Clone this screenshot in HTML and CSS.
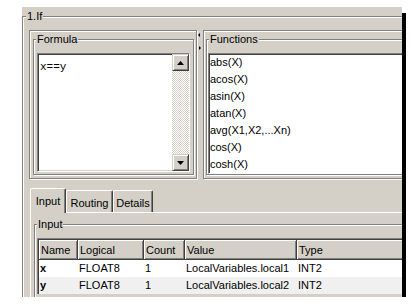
FILE: index.html
```html
<!DOCTYPE html>
<html lang="en">
<head>
    <meta charset="UTF-8">
    <title>1.If</title>
    <link rel="stylesheet" href="styles.css">
</head>
<body>

    <div class="window">
        <div class="group outer">
            <div class="legend">1.If</div>

            <div class="split">
                <div class="pane left">
                    <div class="group formula">
                        <div class="legend">Formula</div>
                        <div class="editor">
                            <div class="code">x==y</div>
                            <div class="vscroll">
                                <div class="sbtn">
                                    <svg width="7" height="4" viewBox="0 0 7 4"><path d="M3.5 0 L7 4 L0 4 Z" fill="#000"/></svg>
                                </div>
                                <div class="track"></div>
                                <div class="sbtn">
                                    <svg width="7" height="4" viewBox="0 0 7 4"><path d="M0 0 L7 0 L3.5 4 Z" fill="#000"/></svg>
                                </div>
                            </div>
                        </div>
                    </div>
                </div>

                <div class="splitter">
                    <svg width="6" height="22" viewBox="0 0 6 22">
                        <path d="M1 4 L3 2 L3 6 Z" fill="#000"/>
                        <path d="M2 15 L4 17 L2 19 Z" fill="#000"/>
                    </svg>
                </div>

                <div class="pane right">
                    <div class="group functions">
                        <div class="legend">Functions</div>
                        <ul class="list">
                            <li>abs(X)</li>
                            <li>acos(X)</li>
                            <li>asin(X)</li>
                            <li>atan(X)</li>
                            <li>avg(X1,X2,...Xn)</li>
                            <li>cos(X)</li>
                            <li>cosh(X)</li>
                        </ul>
                    </div>
                </div>
            </div>

            <div class="tabs">
                <div class="tab active tab-input">Input</div>
                <div class="tab tab-routing">Routing</div>
                <div class="tab tab-details">Details</div>
            </div>

            <div class="tabpage">
                <div class="group input">
                    <div class="legend">Input</div>
                    <div class="gridbox">
                        <table class="grid">
                            <colgroup>
                                <col class="c-name">
                                <col class="c-logical">
                                <col class="c-count">
                                <col class="c-value">
                                <col class="c-type">
                            </colgroup>
                            <tr>
                                <th>Name</th>
                                <th>Logical</th>
                                <th>Count</th>
                                <th>Value</th>
                                <th>Type</th>
                            </tr>
                            <tr>
                                <td class="name">x</td>
                                <td>FLOAT8</td>
                                <td>1</td>
                                <td>LocalVariables.local1</td>
                                <td>INT2</td>
                            </tr>
                            <tr class="alt">
                                <td class="name">y</td>
                                <td>FLOAT8</td>
                                <td>1</td>
                                <td>LocalVariables.local2</td>
                                <td>INT2</td>
                            </tr>
                        </table>
                    </div>
                </div>
            </div>
        </div>
    </div>

</body>
</html>
```

FILE: styles.css
```css
body {
    margin: 0;
    background: #fff;
    font-family: "Liberation Sans", Arial, sans-serif;
    font-size: 11px;
    color: #000;
}

/* ventana con sombra negra */
.window {
    margin: 7px 0 0 22px;
    width: 380px;
    height: 290px;
    background: #d4d0c8;
    overflow: hidden;
    box-shadow: 5px 5px 0 -1px #000;
}

/* marcos tipo groupbox (linea grabada) */
.group {
    box-sizing: border-box;
    border: 1px solid #808080;
    box-shadow: inset 1px 1px #fff, 1px 1px #fff;
}
.legend {
    width: fit-content;
    height: 13px;
    line-height: 13px;
    margin: -7px 0 0 2px;
    padding: 0 1px;
    background: #d4d0c8;
}

.outer {
    margin-top: 9px;
    width: 420px;
    height: 320px;
    padding-left: 6px;
}
.outer > .legend {
    margin-left: -3px;
}

/* paneles superiores */
.split {
    display: flex;
    margin-top: 7px;
    height: 149px;
}
.pane {
    box-sizing: border-box;
    border: 1px solid #808080;
    box-shadow: inset 1px 1px #fff, 1px 1px #fff;
    height: 149px;
}
.pane.left {
    width: 168px;
    padding-left: 3px;
}
.pane.right {
    width: 230px;
    padding-left: 2px;
}
.splitter {
    width: 6px;
    padding-top: 1px;
}
.splitter svg {
    display: block;
}

.formula,
.functions {
    margin-top: 8px;
    height: 136px;
}
.formula {
    width: 161px;
}
.functions {
    width: 224px;
}

.editor {
    display: flex;
    box-sizing: border-box;
    margin: 7px 0 0 3px;
    width: 153px;
    height: 119px;
    background: #fff;
    border: 1px solid;
    border-color: #808080 #fff #fff #808080;
    box-shadow: inset 1px 1px #404040, inset -1px -1px #d4d0c8;
}
.code {
    flex: 1;
    padding: 7px 0 0 2px;
    font-family: "Liberation Mono", "Courier New", monospace;
    font-size: 11px;
    line-height: 13px;
}
.vscroll {
    width: 17px;
    display: flex;
    flex-direction: column;
}
.sbtn {
    box-sizing: border-box;
    height: 17px;
    display: flex;
    justify-content: center;
    align-items: center;
    background: #d4d0c8;
    border: 1px solid;
    border-color: #d4d0c8 #404040 #404040 #d4d0c8;
    box-shadow: inset 1px 1px #fff, inset -1px -1px #808080;
}
.track {
    flex: 1;
    background: repeating-conic-gradient(#d4d0c8 0 25%, #fff 0 50%) 0 0 / 2px 2px;
}

.list {
    list-style: none;
    box-sizing: border-box;
    margin: 7px 0 0 1px;
    padding: 0 0 0 1px;
    height: 121px;
    background: #fff;
    border: 1px solid;
    border-color: #808080 #fff #fff #808080;
    box-shadow: inset 1px 1px #404040;
}
.list li {
    height: 17px;
    line-height: 17px;
    white-space: nowrap;
}

/* pestanas */
.tabs {
    display: flex;
    align-items: flex-end;
    margin: 9px 0 0 1px;
    height: 24px;
}
.tab {
    box-sizing: border-box;
    height: 22px;
    padding-top: 6px;
    line-height: 13px;
    text-align: center;
    border-left: 1px solid #fff;
    border-top: 1px solid #fff;
    border-right: 1px solid #404040;
    border-radius: 2px 2px 0 0;
    box-shadow: inset -1px 0 #808080;
}
.tab.active {
    position: relative;
    z-index: 1;
    height: 25px;
    margin-bottom: -1px;
    background: #d4d0c8;
}
.tab-input { width: 36px; }
.tab-routing { width: 47px; }
.tab-details { width: 40px; }

.tabpage {
    margin-left: 1px;
    height: 120px;
    border-top: 1px solid #fff;
    border-left: 1px solid #fff;
    padding-top: 11px;
    padding-left: 3px;
}

.input {
    width: 380px;
    height: 100px;
}

/* tabla de variables */
.gridbox {
    margin: 7px 0 0 2px;
    width: 370px;
    background: #404040;
    border-top: 1px solid #808080;
    border-left: 1px solid #808080;
    padding: 1px 0 0 1px;
}
.grid {
    border-spacing: 0;
    table-layout: fixed;
    width: 390px;
    background: #fff;
}
.c-name { width: 39px; }
.c-logical { width: 66px; }
.c-count { width: 41px; }
.c-value { width: 112px; }
.c-type { width: 132px; }

.grid th {
    box-sizing: border-box;
    height: 20px;
    padding: 0 0 0 2px;
    font-weight: normal;
    text-align: left;
    background: #d4d0c8;
    border-right: 1px solid #404040;
    border-bottom: 1px solid #404040;
    box-shadow: inset 1px 1px #fff, inset -1px -1px #808080;
    white-space: nowrap;
}
.grid td {
    height: 17px;
    padding: 0 0 0 1px;
    line-height: 17px;
    white-space: nowrap;
}
.grid td.name {
    font-weight: bold;
}
.grid tr.alt td {
    background: #f0f0f0;
}
```
